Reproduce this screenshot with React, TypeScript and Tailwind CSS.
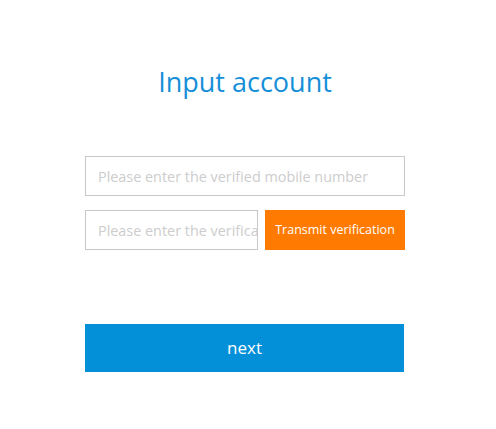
const App = () => {
  return (
    <div className="min-h-screen w-full bg-white font-['Open_Sans',sans-serif]">
      <div className="ml-[85px] w-[320px] pt-[62px]">
        {/* Title */}
        <h1 className="text-center text-[27px] leading-[40px] text-[#168fd8]">Input account</h1>

        {/* Fields */}
        <div className="mt-[54px] flex flex-col gap-[14px]">
          <input
            type="text"
            placeholder="Please enter the verified mobile number"
            className="h-[40px] w-[320px] border border-[#c8c8c8] px-[12px] text-[14.4px] text-[#333] outline-none placeholder:text-[#cdcdcd]"
          />
          <div className="flex items-center justify-between">
            <input
              type="text"
              placeholder="Please enter the verification code"
              className="h-[40px] w-[173px] border border-[#c8c8c8] pl-[12px] pr-0 text-[14.4px] text-[#333] outline-none placeholder:text-[#cdcdcd]"
            />
            <button className="h-[40px] w-[140px] bg-[#ff7a00] text-[12.5px] text-white">
              Transmit verification
            </button>
          </div>
        </div>

        {/* Next */}
        <button className="mt-[74px] h-[48px] w-[319px] bg-[#0490d8] text-[17px] text-white">next</button>
      </div>
    </div>
  );
};

export default App;
